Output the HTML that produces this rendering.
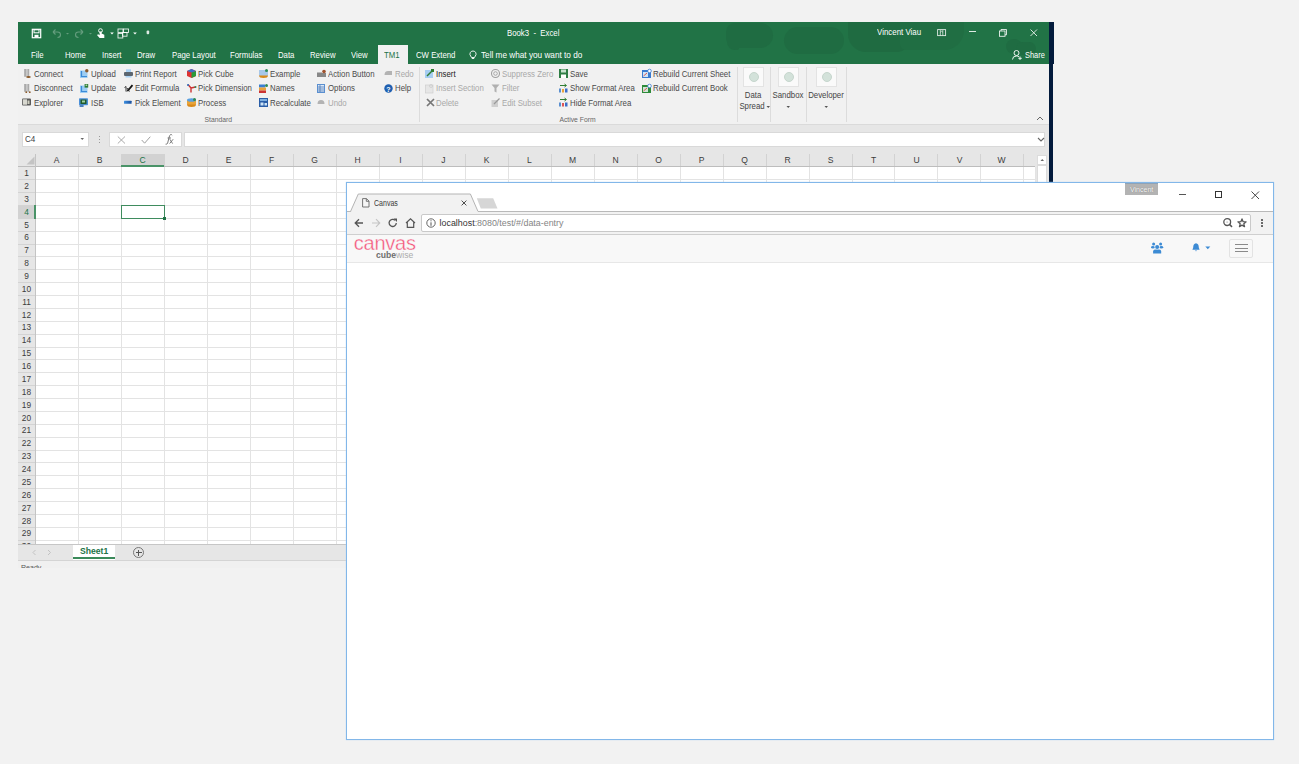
<!DOCTYPE html><html><head><meta charset="utf-8"><style>
*{box-sizing:border-box;margin:0;padding:0}
html,body{width:1299px;height:764px;overflow:hidden;background:#f2f2f2;font-family:"Liberation Sans",sans-serif;}
.a{position:absolute}
.t{position:absolute;white-space:nowrap;line-height:1}
.rb{position:absolute;white-space:nowrap;line-height:1;font-size:8.7px;color:#4a4a4a;transform:scaleX(.9);transform-origin:0 0}
.gr{color:#a8a8a8}
.hd{position:absolute;font-size:9.3px;color:#3c3c3c;line-height:1;text-align:center;transform:scaleX(.92);transform-origin:50% 0}
.rn{position:absolute;left:18px;width:17px;font-size:9.6px;color:#3c3c3c;line-height:1;text-align:center;transform:scaleX(.87);transform-origin:50% 0}
.tab{position:absolute;white-space:nowrap;line-height:1;font-size:8.4px;color:#fff;top:51.0px;transform:scaleX(.93);transform-origin:0 0}
.sx{transform:scaleX(.92);transform-origin:0 0}
svg{position:absolute;overflow:visible}
</style></head><body><div class="a" style="left:18px;top:22px;width:1031px;height:42px;background:#217346"></div>
<div class="a" style="left:726px;top:23px;width:47px;height:25px;background:#1f6c42;border-radius:10px 14px 14px 12px"></div>
<div class="a" style="left:727px;top:40px;width:12px;height:10px;background:#1f6c42;border-radius:0 0 2px 8px"></div>
<div class="a" style="left:784px;top:27px;width:60px;height:27px;background:#1f6c42;border-radius:14px"></div>
<div class="a" style="left:848px;top:22px;width:60px;height:30px;background:#1f6b41;border-radius:0 0 10px 18px"></div>
<div class="a" style="left:900px;top:22px;width:64px;height:28px;background:#206e43;border-radius:0 0 20px 6px"></div>
<div class="a" style="left:1006px;top:39px;width:16px;height:15px;background:#1f6c42;border-radius:8px"></div>
<div class="a" style="left:1016px;top:42px;width:20px;height:13px;background:#1f6c42;border-radius:7px"></div>
<div class="a" style="left:1049px;top:22px;width:5px;height:42px;background:#031b3c"></div>
<div class="a" style="left:1049px;top:64px;width:4px;height:128px;background:#031b3c"></div>
<svg style="left:31px;top:28px;" width="11" height="10" viewBox="0 0 11 10"><rect x="1.3" y="1.3" width="8.4" height="8.4" fill="none" stroke="#fff" stroke-width="1.2"/><rect x="3" y="1.8" width="5" height="3" fill="none" stroke="#fff" stroke-width="1"/><rect x="3.5" y="6.8" width="4" height="2.5" fill="#fff"/></svg>
<svg style="left:51px;top:28px;" width="11" height="11" viewBox="0 0 11 11"><path d="M2 4 L4.5 1.5 M2 4 L4.5 6.5 M2 4 H6.5 Q9.5 4 9.5 6.8 Q9.5 9.5 6.5 9.5" fill="none" stroke="#fff" stroke-opacity=".3" stroke-width="1.1"/></svg>
<svg style="left:65px;top:31px;" width="5" height="5" viewBox="0 0 5 5"><path d="M1 2 H4 L2.5 3.5 Z" fill="#fff" fill-opacity=".3"/></svg>
<svg style="left:74px;top:28px;" width="11" height="11" viewBox="0 0 11 11"><path d="M9 4 L6.5 1.5 M9 4 L6.5 6.5 M9 4 H4.5 Q1.5 4 1.5 6.8 Q1.5 9.5 4.5 9.5" fill="none" stroke="#fff" stroke-opacity=".3" stroke-width="1.1"/></svg>
<svg style="left:88px;top:31px;" width="5" height="5" viewBox="0 0 5 5"><path d="M1 2 H4 L2.5 3.5 Z" fill="#fff" fill-opacity=".3"/></svg>
<svg style="left:96px;top:27.5px;" width="9" height="11" viewBox="0 0 9 11"><circle cx="4.5" cy="2.6" r="1.9" fill="none" stroke="#fff" stroke-width="0.9"/><path d="M3.6 3.5 V7.3 L2.2 6.3 L1 7 L3.6 10 H8.3 V6.8 L5.6 5.6 V3.5 Z" fill="#fff"/></svg>
<svg style="left:109.5px;top:31.5px;" width="4" height="3" viewBox="0 0 4 3"><path d="M0.2 0.5 H3.8 L2 2.6 Z" fill="#fff"/></svg>
<svg style="left:117px;top:27.5px;" width="12" height="11" viewBox="0 0 12 11"><rect x="1" y="1" width="5" height="3.5" fill="none" stroke="#fff" stroke-width="0.9" stroke-opacity=".9"/><rect x="6.5" y="1" width="5" height="3.5" fill="none" stroke="#fff" stroke-width="0.9" stroke-opacity=".9"/><rect x="5.5" y="4.5" width="4.5" height="3.7" fill="none" stroke="#fff" stroke-width="0.9" stroke-opacity=".9"/><rect x="1" y="5.5" width="4.8" height="4.5" fill="none" stroke="#fff" stroke-width="0.9" stroke-opacity=".9"/></svg>
<svg style="left:132.5px;top:31.5px;" width="4" height="3" viewBox="0 0 4 3"><path d="M0.2 0.5 H3.8 L2 2.6 Z" fill="#fff"/></svg>
<svg style="left:145.5px;top:30px;" width="4" height="5" viewBox="0 0 4 5"><rect x="0.6" y="0.5" width="2.6" height="3.8" rx="1" fill="#fff" fill-opacity=".85"/></svg>
<div class="t" style="left:506.5px;top:28.6px;font-size:8.4px;color:#fff;transform:scaleX(.93);transform-origin:0 0">Book3&nbsp;&nbsp;-&nbsp;&nbsp;Excel</div>
<div class="t" style="left:876.7px;top:28.0px;font-size:8.5px;color:#fff;transform:scaleX(.93);transform-origin:0 0">Vincent Viau</div>
<svg style="left:936.5px;top:28.5px;" width="10" height="8" viewBox="0 0 10 8"><rect x="0.6" y="0.6" width="8" height="6" fill="none" stroke="#fff" stroke-opacity=".85" stroke-width="0.9"/><path d="M3.3 1 V6.5 M5.8 1 V6.5 M3.3 3.2 L4.55 2.2 L5.8 3.2" stroke="#fff" stroke-opacity=".85" stroke-width="0.8" fill="none"/></svg>
<div class="a" style="left:969px;top:31.2px;width:6.5px;height:1px;background:rgba(255,255,255,.85)"></div>
<svg style="left:998.5px;top:28.5px;" width="9" height="8" viewBox="0 0 9 8"><rect x="0.5" y="2" width="5.5" height="5.3" fill="none" stroke="#fff" stroke-opacity=".9" stroke-width="0.9"/><path d="M2 2 V0.5 H7.5 V5.8 H6" fill="none" stroke="#fff" stroke-opacity=".9" stroke-width="0.9"/></svg>
<svg style="left:1029.5px;top:28.5px;" width="8" height="8" viewBox="0 0 8 8"><path d="M0.5 0.5 L7 7 M7 0.5 L0.5 7" stroke="#fff" stroke-opacity=".9" stroke-width="0.9"/></svg>
<div class="tab" style="left:30.8px">File</div>
<div class="tab" style="left:64.8px">Home</div>
<div class="tab" style="left:102.2px">Insert</div>
<div class="tab" style="left:137px">Draw</div>
<div class="tab" style="left:171.5px">Page Layout</div>
<div class="tab" style="left:230px">Formulas</div>
<div class="tab" style="left:278px">Data</div>
<div class="tab" style="left:310.4px">Review</div>
<div class="tab" style="left:351.3px">View</div>
<div class="tab" style="left:415.5px">CW Extend</div>
<div class="a" style="left:377.6px;top:44.6px;width:30px;height:20px;background:#f1f1f1"></div>
<div class="tab" style="left:481.3px;transform:scaleX(.98)">Tell me what you want to do</div>
<div class="tab" style="left:384.3px;color:#217346">TM1</div>
<svg style="left:469px;top:50px;" width="8" height="10" viewBox="0 0 8 10"><path d="M4 1 A3 3 0 0 1 6.3 6 L5.5 7.5 H2.5 L1.7 6 A3 3 0 0 1 4 1 Z M2.8 8.5 H5.2" fill="none" stroke="#fff" stroke-width="0.9"/></svg>
<svg style="left:1011.5px;top:50px;" width="11" height="10" viewBox="0 0 11 10"><circle cx="4.5" cy="3" r="2.5" fill="none" stroke="#fff" stroke-width="0.9"/><path d="M0.5 9.5 Q0.5 6 4.5 6 Q6 6 7 6.8 M8 6.5 V10 M6.3 8.3 H9.8" fill="none" stroke="#fff" stroke-width="0.9"/></svg>
<div class="t" style="left:1025px;top:51.6px;font-size:8.2px;color:#fff;transform:scaleX(.91);transform-origin:0 0">Share</div>
<div class="a" style="left:18px;top:64px;width:1031px;height:60px;background:#f1f1f1"></div>
<div class="a" style="left:18px;top:124px;width:1031px;height:1px;background:#dadada"></div>
<div class="rb" style="left:33.7px;top:69.5px;">Connect</div>
<div class="rb" style="left:33.7px;top:84.0px;">Disconnect</div>
<div class="rb" style="left:33.7px;top:98.6px;">Explorer</div>
<div class="rb" style="left:91.0px;top:69.5px;">Upload</div>
<div class="rb" style="left:91.0px;top:84.0px;">Update</div>
<div class="rb" style="left:91.0px;top:98.6px;">ISB</div>
<div class="rb" style="left:134.7px;top:69.5px;">Print Report</div>
<div class="rb" style="left:134.7px;top:84.0px;">Edit Formula</div>
<div class="rb" style="left:134.7px;top:98.6px;">Pick Element</div>
<div class="rb" style="left:197.7px;top:69.5px;">Pick Cube</div>
<div class="rb" style="left:197.7px;top:84.0px;">Pick Dimension</div>
<div class="rb" style="left:197.7px;top:98.6px;">Process</div>
<div class="rb" style="left:269.7px;top:69.5px;">Example</div>
<div class="rb" style="left:269.7px;top:84.0px;">Names</div>
<div class="rb" style="left:269.7px;top:98.6px;">Recalculate</div>
<div class="rb" style="left:328.0px;top:69.5px;">Action Button</div>
<div class="rb" style="left:328.0px;top:84.0px;">Options</div>
<div class="rb" style="left:328.0px;top:98.6px;color:#a8a8a8">Undo</div>
<div class="rb" style="left:394.8px;top:69.5px;color:#a8a8a8">Redo</div>
<div class="rb" style="left:394.8px;top:84.0px;">Help</div>
<div class="rb" style="left:436.2px;top:69.5px;color:#222">Insert</div>
<div class="rb" style="left:436.2px;top:84.0px;color:#a8a8a8">Insert Section</div>
<div class="rb" style="left:436.2px;top:98.6px;color:#a8a8a8">Delete</div>
<div class="rb" style="left:501.9px;top:69.5px;color:#a8a8a8">Suppress Zero</div>
<div class="rb" style="left:501.9px;top:84.0px;color:#a8a8a8">Filter</div>
<div class="rb" style="left:501.9px;top:98.6px;color:#a8a8a8">Edit Subset</div>
<div class="rb" style="left:569.8px;top:69.5px;">Save</div>
<div class="rb" style="left:569.8px;top:84.0px;">Show Format Area</div>
<div class="rb" style="left:569.8px;top:98.6px;">Hide Format Area</div>
<div class="rb" style="left:653.4px;top:69.5px;">Rebuild Current Sheet</div>
<div class="rb" style="left:653.4px;top:84.0px;">Rebuild Current Book</div>
<svg style="left:24px;top:69px;" width="9" height="9" viewBox="0 0 9 9"><defs><linearGradient id="gc" x1="0" x2="1"><stop offset="0" stop-color="#8a8a8a"/><stop offset=".5" stop-color="#d0d0d0"/><stop offset="1" stop-color="#9a9a9a"/></linearGradient></defs><rect x="0.4" y="0" width="4.8" height="7.8" fill="url(#gc)"/><ellipse cx="4.5" cy="8" rx="2.3" ry="1" fill="#8b5a2b"/></svg>
<svg style="left:24px;top:83.5px;" width="9" height="9" viewBox="0 0 9 9"><rect x="0.4" y="0" width="4.8" height="7.8" fill="url(#gc)"/><circle cx="2.3" cy="8.2" r="0.9" fill="#8b5a2b"/><circle cx="5.8" cy="8.2" r="0.9" fill="#8b5a2b"/></svg>
<svg style="left:22px;top:98px;" width="9" height="9" viewBox="0 0 9 9"><rect x="0" y="0.5" width="9" height="7" rx="1" fill="#5a5a5a"/><rect x="0.8" y="1.3" width="4.2" height="5.4" fill="#d8d8d0"/><rect x="5.5" y="2.5" width="2" height="3.5" fill="#cfcfc0"/></svg>
<svg style="left:80px;top:69px;" width="9" height="9" viewBox="0 0 9 9"><rect x="0" y="1.5" width="7.5" height="7.5" fill="#9ccdf3"/><path d="M1.5 2 V7.5 H7" stroke="#3a8ad8" stroke-width="1.2" fill="none"/><circle cx="6.8" cy="1.8" r="1.7" fill="#8b5a2b"/></svg>
<svg style="left:80px;top:83.5px;" width="9" height="9" viewBox="0 0 9 9"><rect x="0" y="1.5" width="7.5" height="7.5" fill="#9ccdf3"/><path d="M1.5 2 V7.5 H7" stroke="#3a8ad8" stroke-width="1.2" fill="none"/><rect x="4.6" y="0" width="3.6" height="3.6" fill="#2e7d32"/><rect x="5.6" y="0.6" width="1.6" height="1.2" fill="#cfe8cf"/></svg>
<svg style="left:79px;top:98px;" width="9" height="9" viewBox="0 0 9 9"><rect x="0" y="0.3" width="9" height="7" rx="0.8" fill="#4a90d9"/><rect x="1.5" y="1.5" width="6" height="4.6" fill="#1f5a2a"/><rect x="3" y="2.5" width="3" height="2" fill="#9fd09f"/><rect x="0.6" y="7.3" width="4" height="1.5" fill="#1f5fb0"/></svg>
<svg style="left:123.5px;top:69px;" width="9" height="9" viewBox="0 0 9 9"><rect x="2" y="0.3" width="5" height="3" fill="#a9d2f5"/><rect x="0" y="3" width="9" height="4" rx="1" fill="#5c6670"/><rect x="1.5" y="7" width="6" height="1.5" fill="#a9d2f5"/></svg>
<svg style="left:123.5px;top:83.5px;" width="9" height="9" viewBox="0 0 9 9"><path d="M3.5 7 L8.5 1.2" stroke="#111" stroke-width="1.8"/><path d="M0.5 3.5 L2 2.5 V7.5 M3 4 L5.5 7.5 M5.5 4 L3 7.5" stroke="#222" stroke-width="0.9" fill="none"/></svg>
<svg style="left:124px;top:98px;" width="9" height="9" viewBox="0 0 9 9"><defs><linearGradient id="gb" x1="0" x2="1"><stop offset="0" stop-color="#3d8fe0"/><stop offset="1" stop-color="#1a4f9c"/></linearGradient></defs><rect x="0" y="2.8" width="7.6" height="3" rx="0.5" fill="url(#gb)"/></svg>
<svg style="left:186.5px;top:69px;" width="9" height="9" viewBox="0 0 9 9"><path d="M4.5 0 L9 2 V7 L4.5 9 L0 7 V2 Z" fill="#d33"/><path d="M4.5 3.5 L9 2 V7 L4.5 9 Z" fill="#2a9a3a"/><path d="M4.5 0 L9 2 L4.5 3.5 L0 2 Z" fill="#3b6fc9"/></svg>
<svg style="left:186.5px;top:83.5px;" width="9" height="9" viewBox="0 0 9 9"><path d="M4 4 L1 0.5 M4 4 L8.5 3 M4 4 L4 8.5" stroke="#c33" stroke-width="1.4"/><circle cx="1" cy="1" r="1" fill="#2a6fc0"/><circle cx="8.5" cy="3" r="1" fill="#2e8b57"/></svg>
<svg style="left:186.5px;top:98px;" width="9" height="9" viewBox="0 0 9 9"><ellipse cx="4.5" cy="6.5" rx="4.5" ry="2.5" fill="#d8891a"/><rect x="0" y="2" width="9" height="4.5" fill="#e9a43a"/><ellipse cx="4.5" cy="2" rx="4.5" ry="1.8" fill="#5aa0e0"/><circle cx="7.5" cy="1.5" r="1.5" fill="#2e8b57"/></svg>
<svg style="left:258.6px;top:69px;" width="9" height="9" viewBox="0 0 9 9"><ellipse cx="4.5" cy="6.5" rx="4.5" ry="2.5" fill="#d8891a"/><rect x="0" y="1" width="9" height="5.5" fill="#a7c7e8"/><circle cx="7.5" cy="1.5" r="1.5" fill="#2e8b57"/></svg>
<svg style="left:258.6px;top:83.5px;" width="9" height="9" viewBox="0 0 9 9"><rect x="0" y="0.5" width="6" height="3" fill="#3b7fd0"/><rect x="0" y="3.5" width="7" height="3" fill="#e9a43a"/><rect x="0" y="6.5" width="7" height="2.5" fill="#c33"/><circle cx="7.5" cy="1.5" r="1.5" fill="#2e8b57"/></svg>
<svg style="left:258.6px;top:98px;" width="9" height="9" viewBox="0 0 9 9"><rect x="0" y="0" width="9" height="9" fill="#2a5ea8"/><rect x="1" y="1" width="7" height="2" fill="#7fb0e0"/><rect x="1.5" y="4.5" width="3" height="3" fill="#cfe5f7"/><rect x="5.5" y="5" width="2.5" height="2.5" fill="#cfe5f7"/></svg>
<svg style="left:316.7px;top:69px;" width="9" height="9" viewBox="0 0 9 9"><rect x="0" y="4" width="9" height="4" fill="#888"/><rect x="0" y="3" width="5" height="1" fill="#bbb"/><circle cx="7" cy="2.5" r="1.8" fill="#a0522d"/></svg>
<svg style="left:316.7px;top:83.5px;" width="9" height="9" viewBox="0 0 9 9"><rect x="0" y="0" width="8" height="9" fill="#5a8fd0"/><rect x="1" y="1" width="6" height="7" fill="#dce9f7"/><path d="M1 3 H7 M1 5 H7 M1 7 H7 M3 1 V8" stroke="#3d6fb0" stroke-width="0.7"/></svg>
<svg style="left:316.7px;top:98px;" width="9" height="9" viewBox="0 0 9 9"><path d="M0.5 6 Q0.5 2 4 2 Q7.5 2 7.5 6 Z" fill="#b3b3b3"/></svg>
<svg style="left:383.5px;top:69px;" width="9" height="9" viewBox="0 0 9 9"><path d="M0.5 6 Q0.5 2 4 2 H8 V6 Z" fill="#b3b3b3"/></svg>
<svg style="left:383.5px;top:83.5px;" width="9" height="9" viewBox="0 0 9 9"><circle cx="4.5" cy="4.5" r="4.2" fill="#1f5fb0"/><text x="4.5" y="7.5" font-size="7" fill="#fff" text-anchor="middle" font-family="Liberation Sans" font-weight="bold">?</text></svg>
<svg style="left:425px;top:69px;" width="9" height="9" viewBox="0 0 9 9"><rect x="0" y="1" width="8" height="8" fill="#a6cdf2"/><path d="M2 7 L6.5 2.5" stroke="#2e7d32" stroke-width="1.4"/><rect x="6" y="0" width="3" height="3" fill="#2e7d32"/></svg>
<svg style="left:425px;top:83.5px;" width="9" height="9" viewBox="0 0 9 9"><rect x="0.5" y="1" width="7.5" height="8" fill="#e6e6e6" stroke="#cfcfcf" stroke-width="0.7"/><circle cx="6" cy="2" r="1.5" fill="none" stroke="#c8c8c8" stroke-width="0.7"/></svg>
<svg style="left:425.5px;top:98px;" width="9" height="9" viewBox="0 0 9 9"><path d="M1 1 L8 8 M8 1 L1 8" stroke="#777" stroke-width="1.7"/></svg>
<svg style="left:490.8px;top:69px;" width="9" height="9" viewBox="0 0 9 9"><circle cx="4.5" cy="4.5" r="4" fill="none" stroke="#a0a0a0" stroke-width="1.1"/><circle cx="4.5" cy="4.5" r="1.8" fill="none" stroke="#a0a0a0" stroke-width="0.9"/></svg>
<svg style="left:490.8px;top:83.5px;" width="9" height="9" viewBox="0 0 9 9"><path d="M0.5 0.5 H8.5 L5.5 4 V8.5 L3.5 7.5 V4 Z" fill="#b0b0b0"/></svg>
<svg style="left:490.8px;top:98px;" width="9" height="9" viewBox="0 0 9 9"><rect x="0.5" y="2" width="6.5" height="7" fill="#cfcfcf"/><path d="M3 6 L8.5 0.5" stroke="#9a9a9a" stroke-width="1.3"/></svg>
<svg style="left:558.5px;top:69px;" width="9" height="9" viewBox="0 0 9 9"><rect x="0" y="0" width="9" height="9" fill="#2e7d45"/><rect x="2" y="0.5" width="5" height="3" fill="#c9e3d0"/><rect x="2" y="5.5" width="5" height="3.5" fill="#fff"/></svg>
<svg style="left:558.5px;top:83.5px;" width="9" height="9" viewBox="0 0 9 9"><path d="M1 1.5 H7 M5.5 0 L7.5 1.5 L5.5 3" stroke="#2e7d32" stroke-width="1" fill="none"/><rect x="0" y="4.5" width="2" height="4" fill="#5a8fd0"/><rect x="3" y="5" width="2" height="3.5" fill="#e9a43a"/><rect x="6" y="4.5" width="2.5" height="4" fill="#3b6fc9"/></svg>
<svg style="left:558.5px;top:98px;" width="9" height="9" viewBox="0 0 9 9"><path d="M1 1.5 H7 M5.5 0 L7.5 1.5 L5.5 3" stroke="#2e7d32" stroke-width="1" fill="none"/><rect x="0" y="4.5" width="2" height="4" fill="#5a8fd0"/><rect x="3" y="5" width="2" height="3.5" fill="#d55"/><rect x="6" y="4.5" width="2.5" height="4" fill="#3b6fc9"/></svg>
<svg style="left:642px;top:69px;" width="9" height="9" viewBox="0 0 9 9"><rect x="0" y="1" width="9" height="8" fill="#3a7bd0"/><rect x="1" y="3" width="5" height="5" fill="#cfe5f7"/><path d="M1.5 7 L5 4" stroke="#d55" stroke-width="1"/><circle cx="7.5" cy="2" r="1.8" fill="#fff" stroke="#3a7bd0" stroke-width="0.8"/></svg>
<svg style="left:642px;top:83.5px;" width="9" height="9" viewBox="0 0 9 9"><rect x="0" y="1" width="9" height="8" fill="#2e8b3a"/><rect x="1" y="3" width="5" height="5" fill="#cfe5d7"/><path d="M1.5 7 L5 4" stroke="#d55" stroke-width="1"/><circle cx="7.5" cy="2" r="1.8" fill="#fff" stroke="#3a7bd0" stroke-width="0.8"/></svg>
<div class="t" style="left:204.5px;top:116.6px;font-size:6.8px;color:#666">Standard</div>
<div class="t" style="left:559.4px;top:116.6px;font-size:6.8px;color:#666">Active Form</div>
<div class="a" style="left:419px;top:67px;width:1px;height:55px;background:#dcdcdc"></div>
<div class="a" style="left:737px;top:67px;width:1px;height:55px;background:#dcdcdc"></div>
<div class="a" style="left:770px;top:67px;width:1px;height:55px;background:#dcdcdc"></div>
<div class="a" style="left:806px;top:67px;width:1px;height:55px;background:#dcdcdc"></div>
<div class="a" style="left:846px;top:67px;width:1px;height:55px;background:#dcdcdc"></div>
<div class="a" style="left:743px;top:67px;width:21px;height:20px;background:#fafafa;border:1px solid #e3e3e3"></div>
<div class="a" style="left:748.5px;top:72px;width:10px;height:10px;border-radius:50%;background:#d3e2da;border:1px solid #c6d6cd"></div>
<div class="t" style="left:723.3px;width:60px;text-align:center;top:91.2px;font-size:8.7px;color:#444;transform:scaleX(.9);transform-origin:50% 0">Data</div>
<div class="t" style="left:721.8px;width:60px;text-align:center;top:101.8px;font-size:8.7px;color:#444;transform:scaleX(.9);transform-origin:50% 0">Spread</div>
<svg style="left:766px;top:104.5px;" width="5" height="4" viewBox="0 0 5 4"><path d="M0.5 1 H4 L2.25 3 Z" fill="#555"/></svg>
<div class="a" style="left:778px;top:67px;width:21px;height:20px;background:#fafafa;border:1px solid #e3e3e3"></div>
<div class="a" style="left:783.5px;top:72px;width:10px;height:10px;border-radius:50%;background:#d3e2da;border:1px solid #c6d6cd"></div>
<div class="t" style="left:758.4px;width:60px;text-align:center;top:91.2px;font-size:8.7px;color:#444;transform:scaleX(.9);transform-origin:50% 0">Sandbox</div>
<svg style="left:786.15px;top:104.5px;" width="5" height="4" viewBox="0 0 5 4"><path d="M0.5 1 H4 L2.25 3 Z" fill="#555"/></svg>
<div class="a" style="left:816px;top:67px;width:21px;height:20px;background:#fafafa;border:1px solid #e3e3e3"></div>
<div class="a" style="left:821.5px;top:72px;width:10px;height:10px;border-radius:50%;background:#d3e2da;border:1px solid #c6d6cd"></div>
<div class="t" style="left:796.3px;width:60px;text-align:center;top:91.2px;font-size:8.7px;color:#444;transform:scaleX(.9);transform-origin:50% 0">Developer</div>
<svg style="left:824.05px;top:104.5px;" width="5" height="4" viewBox="0 0 5 4"><path d="M0.5 1 H4 L2.25 3 Z" fill="#555"/></svg>
<svg style="left:1036px;top:116px;" width="8" height="5" viewBox="0 0 8 5"><path d="M1 4 L4 1 L7 4" stroke="#666" stroke-width="1" fill="none"/></svg>
<div class="a" style="left:18px;top:125px;width:1031px;height:29px;background:#e6e6e6"></div>
<div class="a" style="left:21.5px;top:131.6px;width:67px;height:15.4px;background:#fff;border:1px solid #d9d9d9"></div>
<div class="t" style="left:24.6px;top:135.4px;font-size:8.8px;color:#444;transform:scaleX(.92);transform-origin:0 0">C4</div>
<svg style="left:80px;top:137px;" width="5" height="4" viewBox="0 0 5 4"><path d="M0.5 1 H4 L2.25 3 Z" fill="#666"/></svg>
<div class="a" style="left:98.5px;top:136px;width:1px;height:1.3px;background:#999"></div>
<div class="a" style="left:98.5px;top:139px;width:1px;height:1.3px;background:#999"></div>
<div class="a" style="left:98.5px;top:142px;width:1px;height:1.3px;background:#999"></div>
<div class="a" style="left:109.4px;top:131.6px;width:73px;height:15.4px;background:#fff;border:1px solid #d9d9d9"></div>
<svg style="left:116.5px;top:135.5px;" width="9" height="8" viewBox="0 0 9 8"><path d="M0.8 0.5 L8 7.5 M8 0.5 L0.8 7.5" stroke="#a0a0a0" stroke-width="0.9"/></svg>
<svg style="left:140.8px;top:135.8px;" width="10" height="8" viewBox="0 0 10 8"><path d="M0.7 4 L3.6 7.2 L9.3 0.7" stroke="#a0a0a0" stroke-width="1" fill="none"/></svg>
<svg style="left:164.3px;top:134px;" width="10" height="11" viewBox="0 0 10 11"><path d="M8.2 1.3 Q7.6 0.3 6.6 0.6 Q5.6 1 5.2 3 L3.6 9.2 Q3.2 10.4 1.6 10.2 M3.6 4 H7" stroke="#6a6a6a" stroke-width="0.9" fill="none"/><path d="M5.8 5.2 L8.6 9.6 M9.2 5.2 L5.6 9.6" stroke="#6a6a6a" stroke-width="0.85"/></svg>
<div class="a" style="left:184.2px;top:131.6px;width:861px;height:15.4px;background:#fff;border:1px solid #d9d9d9"></div>
<svg style="left:1036.5px;top:137px;" width="8" height="5" viewBox="0 0 8 5"><path d="M1 1 L4 4 L7 1" stroke="#666" stroke-width="1.1" fill="none"/></svg>
<div class="a" style="left:18px;top:154px;width:1031px;height:13px;background:#e6e6e6"></div>
<div class="a" style="left:18px;top:166px;width:1017px;height:1px;background:#bdbdbd"></div>
<svg style="left:25.5px;top:156px;" width="9" height="9" viewBox="0 0 9 9"><path d="M8.5 0.5 V8.5 H0.5 Z" fill="#c4c4c4"/></svg>
<div class="a" style="left:35px;top:167px;width:1000px;height:377px;background:#fff"></div>
<div class="a" style="left:18px;top:167px;width:17px;height:377px;background:#e6e6e6"></div>
<div class="a" style="left:35px;top:154px;width:1px;height:390px;background:#c4c4c4"></div>
<div class="a" style="left:78px;top:154px;width:1px;height:12px;background:#d2d2d2"></div>
<div class="a" style="left:78px;top:167px;width:1px;height:377px;background:#e3e3e3"></div>
<div class="a" style="left:121px;top:154px;width:1px;height:12px;background:#d2d2d2"></div>
<div class="a" style="left:121px;top:167px;width:1px;height:377px;background:#e3e3e3"></div>
<div class="a" style="left:164px;top:154px;width:1px;height:12px;background:#d2d2d2"></div>
<div class="a" style="left:164px;top:167px;width:1px;height:377px;background:#e3e3e3"></div>
<div class="a" style="left:207px;top:154px;width:1px;height:12px;background:#d2d2d2"></div>
<div class="a" style="left:207px;top:167px;width:1px;height:377px;background:#e3e3e3"></div>
<div class="a" style="left:250px;top:154px;width:1px;height:12px;background:#d2d2d2"></div>
<div class="a" style="left:250px;top:167px;width:1px;height:377px;background:#e3e3e3"></div>
<div class="a" style="left:293px;top:154px;width:1px;height:12px;background:#d2d2d2"></div>
<div class="a" style="left:293px;top:167px;width:1px;height:377px;background:#e3e3e3"></div>
<div class="a" style="left:336px;top:154px;width:1px;height:12px;background:#d2d2d2"></div>
<div class="a" style="left:336px;top:167px;width:1px;height:377px;background:#e3e3e3"></div>
<div class="a" style="left:379px;top:154px;width:1px;height:12px;background:#d2d2d2"></div>
<div class="a" style="left:379px;top:167px;width:1px;height:377px;background:#e3e3e3"></div>
<div class="a" style="left:422px;top:154px;width:1px;height:12px;background:#d2d2d2"></div>
<div class="a" style="left:422px;top:167px;width:1px;height:377px;background:#e3e3e3"></div>
<div class="a" style="left:465px;top:154px;width:1px;height:12px;background:#d2d2d2"></div>
<div class="a" style="left:465px;top:167px;width:1px;height:377px;background:#e3e3e3"></div>
<div class="a" style="left:508px;top:154px;width:1px;height:12px;background:#d2d2d2"></div>
<div class="a" style="left:508px;top:167px;width:1px;height:377px;background:#e3e3e3"></div>
<div class="a" style="left:551px;top:154px;width:1px;height:12px;background:#d2d2d2"></div>
<div class="a" style="left:551px;top:167px;width:1px;height:377px;background:#e3e3e3"></div>
<div class="a" style="left:594px;top:154px;width:1px;height:12px;background:#d2d2d2"></div>
<div class="a" style="left:594px;top:167px;width:1px;height:377px;background:#e3e3e3"></div>
<div class="a" style="left:637px;top:154px;width:1px;height:12px;background:#d2d2d2"></div>
<div class="a" style="left:637px;top:167px;width:1px;height:377px;background:#e3e3e3"></div>
<div class="a" style="left:680px;top:154px;width:1px;height:12px;background:#d2d2d2"></div>
<div class="a" style="left:680px;top:167px;width:1px;height:377px;background:#e3e3e3"></div>
<div class="a" style="left:723px;top:154px;width:1px;height:12px;background:#d2d2d2"></div>
<div class="a" style="left:723px;top:167px;width:1px;height:377px;background:#e3e3e3"></div>
<div class="a" style="left:766px;top:154px;width:1px;height:12px;background:#d2d2d2"></div>
<div class="a" style="left:766px;top:167px;width:1px;height:377px;background:#e3e3e3"></div>
<div class="a" style="left:809px;top:154px;width:1px;height:12px;background:#d2d2d2"></div>
<div class="a" style="left:809px;top:167px;width:1px;height:377px;background:#e3e3e3"></div>
<div class="a" style="left:852px;top:154px;width:1px;height:12px;background:#d2d2d2"></div>
<div class="a" style="left:852px;top:167px;width:1px;height:377px;background:#e3e3e3"></div>
<div class="a" style="left:894px;top:154px;width:1px;height:12px;background:#d2d2d2"></div>
<div class="a" style="left:894px;top:167px;width:1px;height:377px;background:#e3e3e3"></div>
<div class="a" style="left:937px;top:154px;width:1px;height:12px;background:#d2d2d2"></div>
<div class="a" style="left:937px;top:167px;width:1px;height:377px;background:#e3e3e3"></div>
<div class="a" style="left:980px;top:154px;width:1px;height:12px;background:#d2d2d2"></div>
<div class="a" style="left:980px;top:167px;width:1px;height:377px;background:#e3e3e3"></div>
<div class="a" style="left:1023px;top:154px;width:1px;height:12px;background:#d2d2d2"></div>
<div class="a" style="left:1023px;top:167px;width:1px;height:377px;background:#e3e3e3"></div>
<div class="a" style="left:1035px;top:167px;width:1px;height:377px;background:#e3e3e3"></div>
<div class="a" style="left:18px;top:179px;width:17px;height:1px;background:#d3d3d3"></div>
<div class="a" style="left:36px;top:179px;width:999px;height:1px;background:#e3e3e3"></div>
<div class="a" style="left:18px;top:192px;width:17px;height:1px;background:#d3d3d3"></div>
<div class="a" style="left:36px;top:192px;width:999px;height:1px;background:#e3e3e3"></div>
<div class="a" style="left:18px;top:205px;width:17px;height:1px;background:#d3d3d3"></div>
<div class="a" style="left:36px;top:205px;width:999px;height:1px;background:#e3e3e3"></div>
<div class="a" style="left:18px;top:218px;width:17px;height:1px;background:#d3d3d3"></div>
<div class="a" style="left:36px;top:218px;width:999px;height:1px;background:#e3e3e3"></div>
<div class="a" style="left:18px;top:231px;width:17px;height:1px;background:#d3d3d3"></div>
<div class="a" style="left:36px;top:231px;width:999px;height:1px;background:#e3e3e3"></div>
<div class="a" style="left:18px;top:244px;width:17px;height:1px;background:#d3d3d3"></div>
<div class="a" style="left:36px;top:244px;width:999px;height:1px;background:#e3e3e3"></div>
<div class="a" style="left:18px;top:256px;width:17px;height:1px;background:#d3d3d3"></div>
<div class="a" style="left:36px;top:256px;width:999px;height:1px;background:#e3e3e3"></div>
<div class="a" style="left:18px;top:269px;width:17px;height:1px;background:#d3d3d3"></div>
<div class="a" style="left:36px;top:269px;width:999px;height:1px;background:#e3e3e3"></div>
<div class="a" style="left:18px;top:282px;width:17px;height:1px;background:#d3d3d3"></div>
<div class="a" style="left:36px;top:282px;width:999px;height:1px;background:#e3e3e3"></div>
<div class="a" style="left:18px;top:295px;width:17px;height:1px;background:#d3d3d3"></div>
<div class="a" style="left:36px;top:295px;width:999px;height:1px;background:#e3e3e3"></div>
<div class="a" style="left:18px;top:308px;width:17px;height:1px;background:#d3d3d3"></div>
<div class="a" style="left:36px;top:308px;width:999px;height:1px;background:#e3e3e3"></div>
<div class="a" style="left:18px;top:321px;width:17px;height:1px;background:#d3d3d3"></div>
<div class="a" style="left:36px;top:321px;width:999px;height:1px;background:#e3e3e3"></div>
<div class="a" style="left:18px;top:334px;width:17px;height:1px;background:#d3d3d3"></div>
<div class="a" style="left:36px;top:334px;width:999px;height:1px;background:#e3e3e3"></div>
<div class="a" style="left:18px;top:347px;width:17px;height:1px;background:#d3d3d3"></div>
<div class="a" style="left:36px;top:347px;width:999px;height:1px;background:#e3e3e3"></div>
<div class="a" style="left:18px;top:359px;width:17px;height:1px;background:#d3d3d3"></div>
<div class="a" style="left:36px;top:359px;width:999px;height:1px;background:#e3e3e3"></div>
<div class="a" style="left:18px;top:372px;width:17px;height:1px;background:#d3d3d3"></div>
<div class="a" style="left:36px;top:372px;width:999px;height:1px;background:#e3e3e3"></div>
<div class="a" style="left:18px;top:385px;width:17px;height:1px;background:#d3d3d3"></div>
<div class="a" style="left:36px;top:385px;width:999px;height:1px;background:#e3e3e3"></div>
<div class="a" style="left:18px;top:398px;width:17px;height:1px;background:#d3d3d3"></div>
<div class="a" style="left:36px;top:398px;width:999px;height:1px;background:#e3e3e3"></div>
<div class="a" style="left:18px;top:411px;width:17px;height:1px;background:#d3d3d3"></div>
<div class="a" style="left:36px;top:411px;width:999px;height:1px;background:#e3e3e3"></div>
<div class="a" style="left:18px;top:424px;width:17px;height:1px;background:#d3d3d3"></div>
<div class="a" style="left:36px;top:424px;width:999px;height:1px;background:#e3e3e3"></div>
<div class="a" style="left:18px;top:437px;width:17px;height:1px;background:#d3d3d3"></div>
<div class="a" style="left:36px;top:437px;width:999px;height:1px;background:#e3e3e3"></div>
<div class="a" style="left:18px;top:450px;width:17px;height:1px;background:#d3d3d3"></div>
<div class="a" style="left:36px;top:450px;width:999px;height:1px;background:#e3e3e3"></div>
<div class="a" style="left:18px;top:462px;width:17px;height:1px;background:#d3d3d3"></div>
<div class="a" style="left:36px;top:462px;width:999px;height:1px;background:#e3e3e3"></div>
<div class="a" style="left:18px;top:475px;width:17px;height:1px;background:#d3d3d3"></div>
<div class="a" style="left:36px;top:475px;width:999px;height:1px;background:#e3e3e3"></div>
<div class="a" style="left:18px;top:488px;width:17px;height:1px;background:#d3d3d3"></div>
<div class="a" style="left:36px;top:488px;width:999px;height:1px;background:#e3e3e3"></div>
<div class="a" style="left:18px;top:501px;width:17px;height:1px;background:#d3d3d3"></div>
<div class="a" style="left:36px;top:501px;width:999px;height:1px;background:#e3e3e3"></div>
<div class="a" style="left:18px;top:514px;width:17px;height:1px;background:#d3d3d3"></div>
<div class="a" style="left:36px;top:514px;width:999px;height:1px;background:#e3e3e3"></div>
<div class="a" style="left:18px;top:527px;width:17px;height:1px;background:#d3d3d3"></div>
<div class="a" style="left:36px;top:527px;width:999px;height:1px;background:#e3e3e3"></div>
<div class="a" style="left:18px;top:540px;width:17px;height:1px;background:#d3d3d3"></div>
<div class="a" style="left:36px;top:540px;width:999px;height:1px;background:#e3e3e3"></div>
<div class="a" style="left:121px;top:154px;width:43px;height:12px;background:#d2d2d2"></div>
<div class="a" style="left:121px;top:165px;width:43px;height:1.5px;background:#4a9368"></div>
<div class="a" style="left:18px;top:206px;width:17px;height:13px;background:#d2d2d2"></div>
<div class="a" style="left:34px;top:205px;width:1.5px;height:14px;background:#4a9368"></div>
<div class="a" style="left:121px;top:204.5px;width:44px;height:14px;border:1.5px solid #3f8c5e"></div>
<div class="a" style="left:163px;top:217px;width:3px;height:3px;background:#217346"></div>
<div class="hd" style="left:35.3px;top:155.7px;width:43.0px;color:#3c3c3c">A</div>
<div class="hd" style="left:78.3px;top:155.7px;width:43.0px;color:#3c3c3c">B</div>
<div class="hd" style="left:121.2px;top:155.7px;width:43.0px;color:#217346">C</div>
<div class="hd" style="left:164.2px;top:155.7px;width:43.0px;color:#3c3c3c">D</div>
<div class="hd" style="left:207.1px;top:155.7px;width:43.0px;color:#3c3c3c">E</div>
<div class="hd" style="left:250.1px;top:155.7px;width:43.0px;color:#3c3c3c">F</div>
<div class="hd" style="left:293.1px;top:155.7px;width:43.0px;color:#3c3c3c">G</div>
<div class="hd" style="left:336.0px;top:155.7px;width:43.0px;color:#3c3c3c">H</div>
<div class="hd" style="left:379.0px;top:155.7px;width:43.0px;color:#3c3c3c">I</div>
<div class="hd" style="left:421.9px;top:155.7px;width:43.0px;color:#3c3c3c">J</div>
<div class="hd" style="left:464.9px;top:155.7px;width:43.0px;color:#3c3c3c">K</div>
<div class="hd" style="left:507.9px;top:155.7px;width:43.0px;color:#3c3c3c">L</div>
<div class="hd" style="left:550.8px;top:155.7px;width:43.0px;color:#3c3c3c">M</div>
<div class="hd" style="left:593.8px;top:155.7px;width:43.0px;color:#3c3c3c">N</div>
<div class="hd" style="left:636.7px;top:155.7px;width:43.0px;color:#3c3c3c">O</div>
<div class="hd" style="left:679.7px;top:155.7px;width:43.0px;color:#3c3c3c">P</div>
<div class="hd" style="left:722.7px;top:155.7px;width:43.0px;color:#3c3c3c">Q</div>
<div class="hd" style="left:765.6px;top:155.7px;width:43.0px;color:#3c3c3c">R</div>
<div class="hd" style="left:808.6px;top:155.7px;width:43.0px;color:#3c3c3c">S</div>
<div class="hd" style="left:851.5px;top:155.7px;width:43.0px;color:#3c3c3c">T</div>
<div class="hd" style="left:894.5px;top:155.7px;width:43.0px;color:#3c3c3c">U</div>
<div class="hd" style="left:937.5px;top:155.7px;width:43.0px;color:#3c3c3c">V</div>
<div class="hd" style="left:980.4px;top:155.7px;width:43.0px;color:#3c3c3c">W</div>
<div class="rn" style="top:168.05px;color:#3c3c3c">1</div>
<div class="rn" style="top:180.92px;color:#3c3c3c">2</div>
<div class="rn" style="top:193.79px;color:#3c3c3c">3</div>
<div class="rn" style="top:206.66px;color:#217346">4</div>
<div class="rn" style="top:219.53px;color:#3c3c3c">5</div>
<div class="rn" style="top:232.40px;color:#3c3c3c">6</div>
<div class="rn" style="top:245.27px;color:#3c3c3c">7</div>
<div class="rn" style="top:258.14px;color:#3c3c3c">8</div>
<div class="rn" style="top:271.01px;color:#3c3c3c">9</div>
<div class="rn" style="top:283.88px;color:#3c3c3c">10</div>
<div class="rn" style="top:296.75px;color:#3c3c3c">11</div>
<div class="rn" style="top:309.62px;color:#3c3c3c">12</div>
<div class="rn" style="top:322.49px;color:#3c3c3c">13</div>
<div class="rn" style="top:335.36px;color:#3c3c3c">14</div>
<div class="rn" style="top:348.23px;color:#3c3c3c">15</div>
<div class="rn" style="top:361.10px;color:#3c3c3c">16</div>
<div class="rn" style="top:373.97px;color:#3c3c3c">17</div>
<div class="rn" style="top:386.84px;color:#3c3c3c">18</div>
<div class="rn" style="top:399.71px;color:#3c3c3c">19</div>
<div class="rn" style="top:412.58px;color:#3c3c3c">20</div>
<div class="rn" style="top:425.45px;color:#3c3c3c">21</div>
<div class="rn" style="top:438.32px;color:#3c3c3c">22</div>
<div class="rn" style="top:451.19px;color:#3c3c3c">23</div>
<div class="rn" style="top:464.06px;color:#3c3c3c">24</div>
<div class="rn" style="top:476.93px;color:#3c3c3c">25</div>
<div class="rn" style="top:489.80px;color:#3c3c3c">26</div>
<div class="rn" style="top:502.67px;color:#3c3c3c">27</div>
<div class="rn" style="top:515.54px;color:#3c3c3c">28</div>
<div class="rn" style="top:528.41px;color:#3c3c3c">29</div>
<div class="rn" style="top:541.28px;color:#3c3c3c">30</div>
<div class="a" style="left:18px;top:544.5px;width:1031px;height:20px;background:#e6e6e6"></div>
<div class="a" style="left:1036px;top:154px;width:13px;height:30px;background:#e6e6e6"></div>
<div class="a" style="left:1037px;top:155px;width:10px;height:10px;background:#fff;border:1px solid #dcdcdc"></div>
<svg style="left:1039.5px;top:158px;" width="5" height="4" viewBox="0 0 5 4"><path d="M0.5 3 H4 L2.25 1 Z" fill="#666"/></svg>
<div class="a" style="left:1037px;top:165px;width:10px;height:20px;background:#fff;border:1px solid #dcdcdc"></div>
<div class="a" style="left:18px;top:544px;width:1031px;height:1px;background:#c6c6c6"></div>
<div class="a" style="left:18px;top:560px;width:1031px;height:1px;background:#d4d4d4"></div>
<div class="a" style="left:73px;top:544.5px;width:42px;height:15.5px;background:#fff"></div>
<div class="a" style="left:73px;top:557px;width:42px;height:1.7px;background:#3b8a5a"></div>
<div class="t" style="left:80px;top:547.2px;font-size:8.6px;font-weight:bold;color:#217346">Sheet1</div>
<svg style="left:32px;top:549px;" width="5" height="7" viewBox="0 0 5 7"><path d="M3.5 1 L1 3.5 L3.5 6" fill="none" stroke="#bdbdbd" stroke-width="0.9"/></svg>
<svg style="left:47px;top:549px;" width="5" height="7" viewBox="0 0 5 7"><path d="M1 1 L3.5 3.5 L1 6" fill="none" stroke="#bdbdbd" stroke-width="0.9"/></svg>
<div class="a" style="left:133px;top:547px;width:11px;height:11px;border:1px solid #777;border-radius:50%"></div>
<div class="a" style="left:135.5px;top:552px;width:6px;height:1px;background:#555"></div>
<div class="a" style="left:138px;top:549.5px;width:1px;height:6px;background:#555"></div>
<div class="a" style="left:18px;top:561px;width:1031px;height:7px;background:#f0f0f0"></div>
<div class="a" style="left:21px;top:561px;width:30px;height:7px;overflow:hidden"><div class="t" style="left:0;top:2.6px;font-size:8px;color:#555;transform:scaleX(.88);transform-origin:0 0">Ready</div></div>
<div class="a" style="left:346px;top:182px;width:928px;height:558px;background:#fff;border:1px solid #82b7e9;box-shadow:0 0 1px #a9cff2"></div>
<div class="a" style="left:347px;top:211px;width:926px;height:23px;background:#f2f2f2"></div>
<div class="a" style="left:347px;top:211px;width:926px;height:1px;background:#b9b9b9"></div>
<div class="a" style="left:347px;top:234px;width:926px;height:1px;background:#cfcfcf"></div>
<svg style="left:349px;top:193px;" width="132" height="19" viewBox="0 0 132 19"><path d="M1.5 18.5 L9.3 1 H121.4 L129 18.5" fill="#f2f2f2" stroke="#b4b4b4" stroke-width="1"/><rect x="2.2" y="18" width="126.5" height="2" fill="#f2f2f2"/></svg>
<svg style="left:361.8px;top:197.8px;" width="8" height="10" viewBox="0 0 8 10"><path d="M0.6 0.6 H4.5 L7 3.1 V9 H0.6 Z M4.3 0.6 V3.3 H7" fill="#f6f6f6" stroke="#666" stroke-width="0.9"/></svg>
<div class="t" style="left:374px;top:198.6px;font-size:8.4px;color:#3a3a3a;transform:scaleX(.84);transform-origin:0 0">Canvas</div>
<svg style="left:461.3px;top:200.3px;" width="6" height="6" viewBox="0 0 6 6"><path d="M0.6 0.6 L5.4 5.4 M5.4 0.6 L0.6 5.4" stroke="#444" stroke-width="0.95"/></svg>
<svg style="left:476px;top:198px;" width="22" height="11" viewBox="0 0 22 11"><path d="M0.8 0.3 H17.2 L21.5 10.4 H4.8 Z" fill="#d6d6d6"/></svg>
<svg style="left:353.5px;top:218px;" width="10" height="10" viewBox="0 0 10 10"><path d="M9 5 H1.5 M5 1.2 L1.2 5 L5 8.8" fill="none" stroke="#555" stroke-width="1.3"/></svg>
<svg style="left:370.5px;top:218px;" width="10" height="10" viewBox="0 0 10 10"><path d="M1 5 H8.5 M5 1.2 L8.8 5 L5 8.8" fill="none" stroke="#c4c4c4" stroke-width="1.1"/></svg>
<svg style="left:388px;top:218px;" width="10" height="10" viewBox="0 0 10 10"><path d="M8.3 5 A3.6 3.6 0 1 1 7.2 2.3" fill="none" stroke="#555" stroke-width="1.3"/><path d="M5.6 0.5 H9 V3.9 Z" fill="#555"/></svg>
<svg style="left:405px;top:218px;" width="11" height="10" viewBox="0 0 11 10"><path d="M1 5 L5.5 0.8 L10 5 M2.3 4 V9.3 H8.7 V4" fill="none" stroke="#555" stroke-width="1.2"/></svg>
<div class="a" style="left:421.4px;top:214px;width:829.6px;height:18px;background:#fff;border:1px solid #c9c9c9;border-radius:2px"></div>
<svg style="left:425.5px;top:217.9px;" width="10" height="10" viewBox="0 0 10 10"><circle cx="5" cy="5" r="4.2" fill="none" stroke="#555" stroke-width="0.9"/><rect x="4.5" y="4.3" width="1" height="3.5" fill="#555"/><rect x="4.5" y="2.3" width="1" height="1" fill="#555"/></svg>
<div class="t" style="left:439.6px;top:219.1px;font-size:8.9px;color:#858585"><span style="color:#333">localhost</span>:8080/test/#/data-entry</div>
<svg style="left:1222px;top:217px;" width="11" height="11" viewBox="0 0 11 11"><circle cx="5.2" cy="5.1" r="3.4" fill="none" stroke="#555" stroke-width="1.3"/><path d="M7.6 7.5 L10 9.8" stroke="#555" stroke-width="1.6"/><path d="M4.3 5.1 H6.1" stroke="#999" stroke-width="0.7"/></svg>
<svg style="left:1236.5px;top:217.5px;" width="10" height="10" viewBox="0 0 10 10"><path d="M5.00 0.90 L6.12 3.66 L9.09 3.87 L6.81 5.79 L7.53 8.68 L5.00 7.10 L2.47 8.68 L3.19 5.79 L0.91 3.87 L3.88 3.66 Z" fill="none" stroke="#555" stroke-width="1.3" stroke-linejoin="round"/></svg>
<div class="a" style="left:1261.4px;top:218.9px;width:1.7px;height:1.7px;background:#666;border-radius:0.3px"></div>
<div class="a" style="left:1261.4px;top:222.1px;width:1.7px;height:1.7px;background:#666;border-radius:0.3px"></div>
<div class="a" style="left:1261.4px;top:225.3px;width:1.7px;height:1.7px;background:#666;border-radius:0.3px"></div>
<div class="a" style="left:1124.7px;top:183px;width:33.5px;height:12px;background:#b3b3b3;border-top:1px solid #8ea3b8"></div>
<div class="t" style="left:1129.5px;top:185.9px;font-size:7.4px;color:#fafafa;transform:scaleX(.95);transform-origin:0 0;text-shadow:0 0 1px #707070">Vincent</div>
<div class="a" style="left:1178.5px;top:194px;width:7px;height:1px;background:#555"></div>
<div class="a" style="left:1214.5px;top:191px;width:7px;height:7px;border:1px solid #333"></div>
<svg style="left:1251px;top:190.5px;" width="9" height="9" viewBox="0 0 9 9"><path d="M0.5 0.5 L8 8 M8 0.5 L0.5 8" stroke="#333" stroke-width="0.9"/></svg>
<div class="a" style="left:347px;top:235px;width:926px;height:27px;background:#f8f8f8"></div>
<div class="a" style="left:347px;top:262px;width:926px;height:1px;background:#e7e7e7"></div>
<div class="t" style="left:353.8px;top:233.2px;font-size:20px;color:#f4557a;letter-spacing:-0.25px;-webkit-text-stroke:0.35px #f8f8f8">canvas</div>
<div class="t" style="left:376px;top:251.2px;font-size:8.6px;color:#ababab"><b style="color:#6e6e6e">cube</b>wise</div>
<svg style="left:1151px;top:242px;" width="13" height="12" viewBox="0 0 13 12"><g fill="#3d8bd4"><circle cx="2.6" cy="1.9" r="1.5"/><circle cx="9.6" cy="1.9" r="1.5"/><ellipse cx="1.9" cy="5.3" rx="1.9" ry="1.3"/><ellipse cx="10.3" cy="5.3" rx="1.9" ry="1.3"/><path d="M2.1 11.4 V9.5 Q2.1 7.2 6.15 7.2 Q10.2 7.2 10.2 9.5 V11.4 Z"/></g><circle cx="6.15" cy="4.9" r="2.5" fill="#f8f8f8"/><circle cx="6.15" cy="4.9" r="2.0" fill="#3d8bd4"/></svg>
<svg style="left:1191.5px;top:243.2px;" width="8" height="9" viewBox="0 0 8 9"><path d="M4 0.3 Q6.8 0.8 6.8 4.5 L7.6 6.8 H0.4 L1.2 4.5 Q1.2 0.8 4 0.3 Z" fill="#3d8bd4"/><path d="M2.8 7.5 Q4 9 5.2 7.5 Z" fill="#3d8bd4"/></svg>
<svg style="left:1205px;top:246px;" width="6" height="4" viewBox="0 0 6 4"><path d="M0.3 0.5 H5.3 L2.8 3.3 Z" fill="#3d8bd4"/></svg>
<div class="a" style="left:1229.4px;top:239px;width:24px;height:19px;background:#f8f8f8;border:1px solid #e3e3e3;border-radius:2px"></div>
<div class="a" style="left:1235px;top:244.2px;width:13px;height:1.3px;background:#8a8a8a"></div>
<div class="a" style="left:1235px;top:247.6px;width:13px;height:1.3px;background:#8a8a8a"></div>
<div class="a" style="left:1235px;top:251.2px;width:13px;height:1.3px;background:#8a8a8a"></div></body></html>
